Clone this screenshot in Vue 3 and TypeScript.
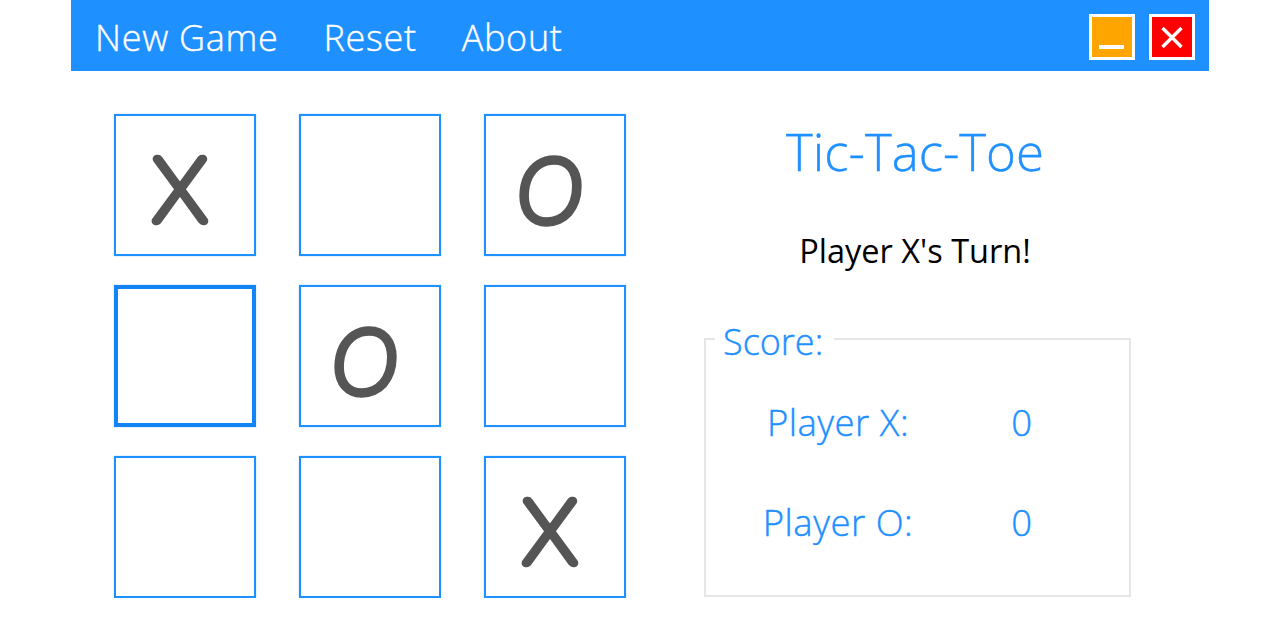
<script setup lang="ts">
const cells: string[] = ['X', '', 'O', '', 'O', '', '', '', 'X']
const menu: string[] = ['New Game', 'Reset', 'About']
const scores: { label: string; value: number }[] = [
  { label: 'Player X:', value: 0 },
  { label: 'Player O:', value: 0 },
]
</script>

<template>
  <div class="window">
    <header class="bar">
      <nav class="menu">
        <span v-for="m in menu" :key="m" class="menu-item">{{ m }}</span>
      </nav>
      <div class="controls">
        <button class="ctl min" aria-label="Minimize">
          <svg width="40" height="40" viewBox="0 0 40 40"><path d="M7 30h25" stroke="#fff" stroke-width="4" /></svg>
        </button>
        <button class="ctl close" aria-label="Close">
          <svg width="40" height="40" viewBox="0 0 40 40"><path d="M10.500 11L29.500 30M29.500 11L10.500 30" stroke="#fff" stroke-width="3.400" /></svg>
        </button>
      </div>
    </header>
    <main class="content">
      <div class="board">
        <div v-for="(c, i) in cells" :key="i" class="cell" :class="{ focus: i === 3 }">
          <svg v-if="c" class="mark" viewBox="0 0 138 138" width="138" height="138">
            <text x="64" :y="c === 'X' ? 105 : 106" text-anchor="middle" class="mark-text" :class="c === 'X' ? 'is-x' : 'is-o'">{{ c }}</text>
          </svg>
        </div>
      </div>
      <section class="side">
        <h1 class="title">Tic-Tac-Toe</h1>
        <p class="status">Player X's Turn!</p>
        <fieldset class="score">
          <legend class="legend">Score:</legend>
          <div class="score-rows">
            <template v-for="s in scores" :key="s.label">
              <span class="score-label">{{ s.label }}</span>
              <span class="score-value">{{ s.value }}</span>
            </template>
          </div>
        </fieldset>
      </section>
    </main>
  </div>
</template>

<style>
html, body { margin: 0; background: #fff; }
</style>

<style scoped>
.window {
  width: 1138px;
  margin: 0 auto;
  font-family: "Open Sans", "Noto Sans", sans-serif;
}
.bar {
  box-sizing: border-box;
  height: 71px;
  background: #1e90ff;
  display: flex;
  align-items: center;
  justify-content: space-between;
  padding: 2px 14px 0 24px;
}
.menu { display: flex; gap: 45px; }
.menu-item {
  color: #fff;
  font-size: 36px;
  font-weight: 300;
  letter-spacing: 0.7px;
  line-height: 69px;
  padding-top: 2px;
  -webkit-text-stroke: 0.4px #fff;
}
.controls { display: flex; gap: 14px; }
.ctl {
  width: 46px;
  height: 46px;
  box-sizing: border-box;
  border: 3px solid #fff;
  padding: 0;
  display: block;
}
.ctl svg { display: block; }
.min { background: #ffa500; }
.close { background: #f00; }
.content {
  display: flex;
  padding: 43px 0 0 43px;
}
.board {
  display: grid;
  grid-template-columns: repeat(3, 142px);
  grid-auto-rows: 142px;
  column-gap: 43px;
  row-gap: 29px;
}
.cell {
  box-sizing: border-box;
  border: 2px solid #1e90ff;
  box-shadow: 0 0 1px rgba(30, 144, 255, 0.6);
  display: flex;
  align-items: center;
  justify-content: center;
}
.cell.focus { border: 4px solid #1284f5; }
.mark { display: block; }
.mark-text {
  font-family: "Lato", sans-serif;
  font-weight: 100;
  font-size: 89px;
  fill: #555;
  stroke: #555;
  stroke-width: 8.500px;
  stroke-linejoin: round;
  stroke-linecap: round;
}
.mark-text.is-o { font-style: italic; }
.mark-text.is-x { font-style: normal; }
.side {
  margin-left: 78px;
  width: 427px;
  display: flex;
  flex-direction: column;
}
.title {
  margin: 0;
  padding-right: 5px;
  text-align: center;
  color: #1e90ff;
  font-size: 51px;
  font-weight: 300;
  line-height: 74px;
  -webkit-text-stroke: 0.4px #1e90ff;
}
.status {
  margin: 25px 0 0;
  padding-right: 5px;
  text-align: center;
  color: #000;
  font-size: 32.500px;
  font-weight: 400;
  line-height: 76px;
  height: 76px;
}
.score {
  box-sizing: border-box;
  margin: 25px 0 0;
  width: 427px;
  height: 283px;
  border: 2px solid #e6e6e6;
  padding: 0;
}
.legend {
  margin-left: 9px;
  padding: 6px 11px 0 8px;
  color: #1e90ff;
  font-size: 36px;
  font-weight: 300;
  line-height: 44px;
  -webkit-text-stroke: 0.4px #1e90ff;
}
.score-rows {
  display: grid;
  grid-template-columns: 264px 104px;
  grid-auto-rows: 100px;
  margin-top: 8px;
  align-items: center;
  justify-items: center;
}
.score-label, .score-value {
  color: #1e90ff;
  font-size: 36.500px;
  font-weight: 300;
  letter-spacing: 0.5px;
  -webkit-text-stroke: 0.4px #1e90ff;
}
</style>
